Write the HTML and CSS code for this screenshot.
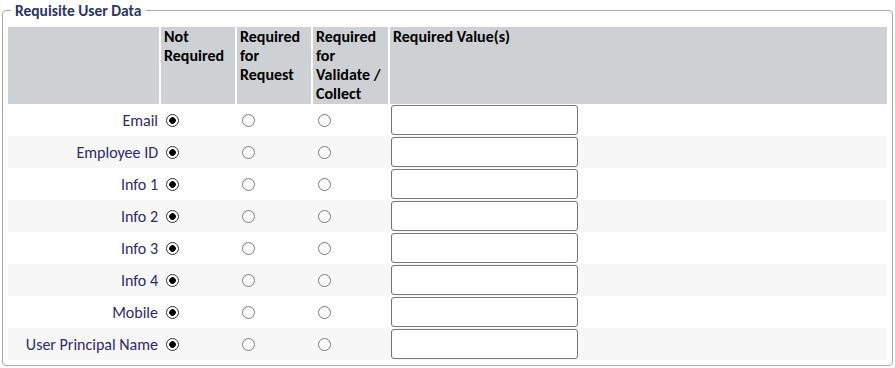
FILE: index.html
```html
<!DOCTYPE html>
<html>
<head>
<meta charset="utf-8">
<link rel="stylesheet" href="styles.css">
</head>
<body>
<fieldset class="box">
  <legend class="box-title">Requisite User Data</legend>
  <table class="grid">
    <colgroup>
      <col class="c-label"><col class="c-radio"><col class="c-radio"><col class="c-radio3"><col>
    </colgroup>
    <thead>
      <tr>
        <th class="h-blank"></th>
        <th>Not<br>Required</th>
        <th>Required<br>for<br>Request</th>
        <th>Required<br>for<br>Validate /<br>Collect</th>
        <th>Required Value(s)</th>
      </tr>
    </thead>
    <tbody>
      <tr><td class="lbl">Email</td><td><input type="radio" name="r1" checked></td><td><input type="radio" name="r1"></td><td><input type="radio" name="r1"></td><td><input class="val" type="text"></td></tr>
      <tr><td class="lbl">Employee ID</td><td><input type="radio" name="r2" checked></td><td><input type="radio" name="r2"></td><td><input type="radio" name="r2"></td><td><input class="val" type="text"></td></tr>
      <tr><td class="lbl">Info 1</td><td><input type="radio" name="r3" checked></td><td><input type="radio" name="r3"></td><td><input type="radio" name="r3"></td><td><input class="val" type="text"></td></tr>
      <tr><td class="lbl">Info 2</td><td><input type="radio" name="r4" checked></td><td><input type="radio" name="r4"></td><td><input type="radio" name="r4"></td><td><input class="val" type="text"></td></tr>
      <tr><td class="lbl">Info 3</td><td><input type="radio" name="r5" checked></td><td><input type="radio" name="r5"></td><td><input type="radio" name="r5"></td><td><input class="val" type="text"></td></tr>
      <tr><td class="lbl">Info 4</td><td><input type="radio" name="r6" checked></td><td><input type="radio" name="r6"></td><td><input type="radio" name="r6"></td><td><input class="val" type="text"></td></tr>
      <tr><td class="lbl">Mobile</td><td><input type="radio" name="r7" checked></td><td><input type="radio" name="r7"></td><td><input type="radio" name="r7"></td><td><input class="val" type="text"></td></tr>
      <tr><td class="lbl">User Principal Name</td><td><input type="radio" name="r8" checked></td><td><input type="radio" name="r8"></td><td><input type="radio" name="r8"></td><td><input class="val" type="text"></td></tr>
    </tbody>
  </table>
</fieldset>
</body>
</html>
```
FILE: styles.css
```css
html, body {
  margin: 0;
  padding: 0;
  background: #fff;
}
body {
  font-family: Carlito, Calibri, Lato, "Open Sans", sans-serif;
  font-size: 16px;
  color: #000;
}
.box {
  margin: 2px 2px 0 2px;
  padding: 0 5px 5px 5px;
  border: 1px solid #a9a9a9;
  border-radius: 4px;
  min-width: 0;
}
.box-title {
  padding: 0 4px;
  margin-left: 3px;
  font-weight: bold;
  font-size: 15.5px;
  line-height: 17px;
  color: #2a3566;
}
.grid {
  width: 100%;
  border-collapse: collapse;
  border-spacing: 0;
  margin-top: 8px;
}
.c-label { width: 152px; }
.c-radio { width: 76px; }
.c-radio3 { width: 77px; }
.grid th {
  background: #cdd1d4;
  text-align: left;
  vertical-align: top;
  font-weight: bold;
  line-height: 19px;
  height: 77px;
  padding: 0 3px;
  box-sizing: border-box;
  border-left: 2px solid #fff;
}
.grid th.h-blank { border-left: 0; }
.grid td {
  padding: 1px;
  height: 32px;
  box-sizing: border-box;
  vertical-align: middle;
}
.grid tbody tr:nth-child(even) td { background: #f7f7f7; }
.grid td.lbl {
  text-align: right;
  padding-right: 2px;
  color: #2c2b6b;
}
.grid input[type="radio"] {
  -webkit-appearance: none;
  appearance: none;
  display: inline-block;
  box-sizing: border-box;
  margin: 0 3px 0 5px;
  width: 13px;
  height: 13px;
  border: 1px solid #7a7a7a;
  border-radius: 50%;
  background: #fff;
  vertical-align: middle;
  position: relative;
  top: -1px;
}
.grid input[type="radio"]:checked {
  border-color: #333;
  background: radial-gradient(circle, #000 0, #000 3px, #fff 3.6px);
}
.val {
  display: block;
  width: 187px;
  height: 30px;
  box-sizing: border-box;
  margin: 0 0 0 1px;
  border: 1px solid #767676;
  border-radius: 3px;
  background: #fff;
}
```
